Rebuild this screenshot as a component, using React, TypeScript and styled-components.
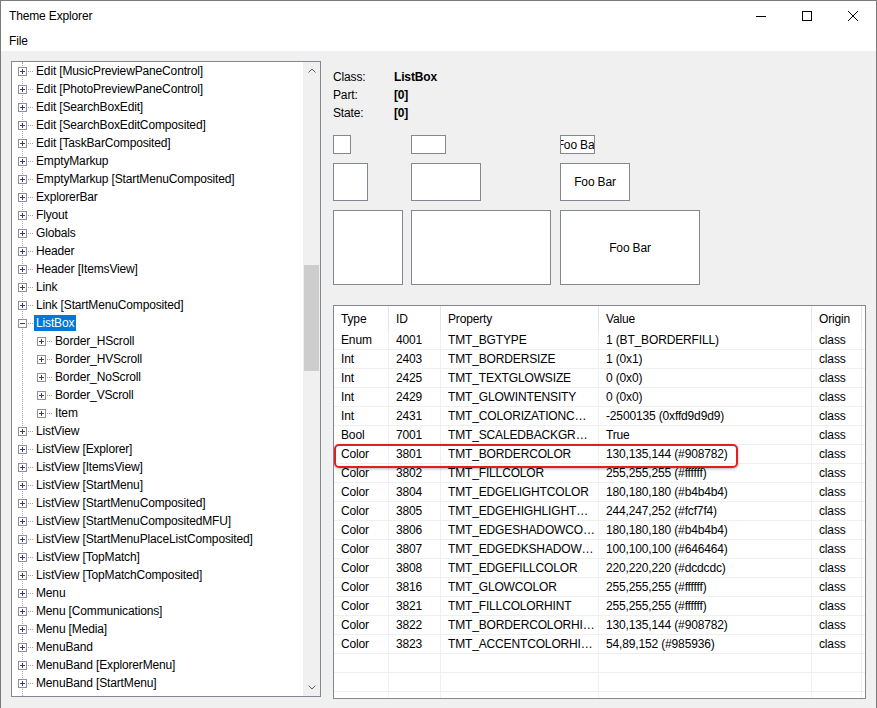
import React from "react";
import styled, { createGlobalStyle } from "styled-components";

const Global = createGlobalStyle`
  html, body { margin: 0; padding: 0; }
  body { font-family: "Liberation Sans", Arial, sans-serif; font-size: 12px; letter-spacing: -0.15px; color: #000; background: #f0f0f0; }
`;

const Win = styled.div`
  width: 877px; height: 708px; box-sizing: border-box; border: 1px solid #7a7a7a; border-bottom: none;
  display: flex; flex-direction: column; background: #f0f0f0; overflow: hidden;
`;
const TitleBar = styled.div`
  height: 29px; background: #fff; display: flex; align-items: center; padding-left: 8px;
`;
const Title = styled.div` flex: 1; `;
const Ctl = styled.div`
  width: 46px; height: 29px; display: flex; align-items: center; justify-content: center;
`;
const MenuBar = styled.div`
  height: 21px; background: #fff; display: flex; align-items: center; padding-left: 8px;
`;
const Body = styled.div`
  flex: 1; display: flex; padding: 10px 10px 0 10px; gap: 12px;
`;
const Tree = styled.div`
  width: 312px; height: 636px; box-sizing: border-box; border: 1px solid #828790; background: #fff;
  display: flex; position: relative;
`;
const TreeList = styled.div` flex: 1; overflow: hidden; position: relative; `;
const TreeRow = styled.div<{ $level: number }>`
  height: 18px; display: flex; align-items: center; padding-left: ${p => 6 + p.$level * 19}px;
`;
const Exp = styled.div`
  width: 9px; height: 9px; box-sizing: border-box; border: 1px solid #919191; background: #fff;
  position: relative; margin-right: 1px; flex: none;
  &::before { content: ""; position: absolute; left: 1px; top: 3px; width: 5px; height: 1px; background: #2c3e8c; }
`;
const Plus = styled(Exp)`
  &::after { content: ""; position: absolute; left: 3px; top: 1px; width: 1px; height: 5px; background: #2c3e8c; }
`;
const Dots = styled.div`
  width: 5px; border-top: 1px dotted #a0a0a0; margin-right: 1px; flex: none;
`;
const Label = styled.span<{ $sel?: boolean }>`
  padding: 1px 2px; background: ${p => (p.$sel ? "#0078d7" : "transparent")};
  color: ${p => (p.$sel ? "#fff" : "#000")};
  white-space: nowrap;
`;
const VLine = styled.div<{ $x: number }>`
  position: absolute; left: ${p => p.$x}px; top: 0; bottom: 0; border-left: 1px dotted #a0a0a0;
`;
const Scroll = styled.div`
  width: 17px; background: #f0f0f0; display: flex; flex-direction: column; align-items: center;
`;
const Arrow = styled.div` height: 17px; display: flex; align-items: center; justify-content: center; `;
const Track = styled.div` flex: 1; width: 100%; position: relative; `;
const Thumb = styled.div`
  position: absolute; left: 1px; right: 1px; top: 186px; height: 106px; background: #cdcdcd;
`;
const Right = styled.div` flex: 1; display: flex; flex-direction: column; `;
const Info = styled.div`
  display: grid; grid-template-columns: 61px auto; row-gap: 1px; padding-top: 8px; line-height: 17px;
`;
const Bold = styled.span` font-weight: bold; `;
const Previews = styled.div`
  display: grid; grid-template-columns: 78px 149px auto; row-gap: 9px; margin-top: 13px; align-items: start;
`;
const PBox = styled.div<{ $w: number; $h: number }>`
  width: ${p => p.$w}px; height: ${p => p.$h}px; box-sizing: border-box; border: 1px solid #828790;
  background: #fff; display: flex; align-items: center; justify-content: center; overflow: hidden;
  white-space: nowrap;
`;
const Table = styled.div`
  margin-top: 20px; width: 533px; height: 394px; box-sizing: border-box; border: 1px solid #828790; background: #fff;
  overflow: hidden; position: relative;
`;
const cols = "55px 52px 158px 213px 50px";
const HeadRow = styled.div`
  display: grid; grid-template-columns: ${cols}; height: 25px;
`;
const HeadCell = styled.div`
  display: flex; align-items: center; padding-left: 7px; border-right: 1px solid #e5e5e5;
`;
const Row = styled.div`
  display: grid; grid-template-columns: ${cols}; height: 19px; border-bottom: 1px solid #f0f0f0; box-sizing: border-box;
`;
const Cell = styled.div`
  padding-left: 7px; padding-right: 3px; border-right: 1px solid #f0f0f0; line-height: 18px;
  white-space: nowrap; overflow: hidden; text-overflow: ellipsis;
`;
const Highlight = styled.div`
  position: absolute; left: 0px; top: 138px; width: 400px; height: 20px; border: 2px solid #e02020;
  border-radius: 5px; box-shadow: 0 1px 3px rgba(0,0,0,0.3);
`;

const tree: [number, string, boolean?][] = [
  [0, "Edit [MusicPreviewPaneControl]"], [0, "Edit [PhotoPreviewPaneControl]"], [0, "Edit [SearchBoxEdit]"],
  [0, "Edit [SearchBoxEditComposited]"], [0, "Edit [TaskBarComposited]"], [0, "EmptyMarkup"],
  [0, "EmptyMarkup [StartMenuComposited]"], [0, "ExplorerBar"], [0, "Flyout"], [0, "Globals"], [0, "Header"],
  [0, "Header [ItemsView]"], [0, "Link"], [0, "Link [StartMenuComposited]"], [0, "ListBox", true],
  [1, "Border_HScroll"], [1, "Border_HVScroll"], [1, "Border_NoScroll"], [1, "Border_VScroll"], [1, "Item"],
  [0, "ListView"], [0, "ListView [Explorer]"], [0, "ListView [ItemsView]"], [0, "ListView [StartMenu]"],
  [0, "ListView [StartMenuComposited]"], [0, "ListView [StartMenuCompositedMFU]"],
  [0, "ListView [StartMenuPlaceListComposited]"], [0, "ListView [TopMatch]"], [0, "ListView [TopMatchComposited]"],
  [0, "Menu"], [0, "Menu [Communications]"], [0, "Menu [Media]"], [0, "MenuBand"], [0, "MenuBand [ExplorerMenu]"],
  [0, "MenuBand [StartMenu]"],
];

const rows = [
  ["Enum", "4001", "TMT_BGTYPE", "1 (BT_BORDERFILL)"],
  ["Int", "2403", "TMT_BORDERSIZE", "1 (0x1)"],
  ["Int", "2425", "TMT_TEXTGLOWSIZE", "0 (0x0)"],
  ["Int", "2429", "TMT_GLOWINTENSITY", "0 (0x0)"],
  ["Int", "2431", "TMT_COLORIZATIONCOL...", "-2500135 (0xffd9d9d9)"],
  ["Bool", "7001", "TMT_SCALEDBACKGROU...", "True"],
  ["Color", "3801", "TMT_BORDERCOLOR", "130,135,144 (#908782)"],
  ["Color", "3802", "TMT_FILLCOLOR", "255,255,255 (#ffffff)"],
  ["Color", "3804", "TMT_EDGELIGHTCOLOR", "180,180,180 (#b4b4b4)"],
  ["Color", "3805", "TMT_EDGEHIGHLIGHTCO...", "244,247,252 (#fcf7f4)"],
  ["Color", "3806", "TMT_EDGESHADOWCOLOR", "180,180,180 (#b4b4b4)"],
  ["Color", "3807", "TMT_EDGEDKSHADOWC...", "100,100,100 (#646464)"],
  ["Color", "3808", "TMT_EDGEFILLCOLOR", "220,220,220 (#dcdcdc)"],
  ["Color", "3816", "TMT_GLOWCOLOR", "255,255,255 (#ffffff)"],
  ["Color", "3821", "TMT_FILLCOLORHINT", "255,255,255 (#ffffff)"],
  ["Color", "3822", "TMT_BORDERCOLORHINT", "130,135,144 (#908782)"],
  ["Color", "3823", "TMT_ACCENTCOLORHINT", "54,89,152 (#985936)"],
];

export default function App() {
  return (
    <Win>
      <Global />
      <TitleBar>
        <Title>Theme Explorer</Title>
        <Ctl><svg width="10" height="10"><path d="M0 5.5h10" stroke="#000" /></svg></Ctl>
        <Ctl><svg width="10" height="10"><rect x="0.5" y="0.5" width="9" height="9" fill="none" stroke="#000" /></svg></Ctl>
        <Ctl><svg width="10" height="10"><path d="M0 0L10 10M10 0L0 10" stroke="#000" /></svg></Ctl>
      </TitleBar>
      <MenuBar>File</MenuBar>
      <Body>
        <Tree>
          <TreeList>
            <VLine $x={10} />
            {tree.map(([lvl, t, sel], i) => (
              <TreeRow key={i} $level={lvl}>
                {sel ? <Exp /> : <Plus />}
                <Dots />
                <Label $sel={sel}>{t}</Label>
              </TreeRow>
            ))}
          </TreeList>
          <Scroll>
            <Arrow><svg width="8" height="5"><path d="M0.5 4.5L4 1L7.5 4.5" fill="none" stroke="#606060" /></svg></Arrow>
            <Track><Thumb /></Track>
            <Arrow><svg width="8" height="5"><path d="M0.5 0.5L4 4L7.5 0.5" fill="none" stroke="#606060" /></svg></Arrow>
          </Scroll>
        </Tree>
        <Right>
          <Info>
            <span>Class:</span><Bold>ListBox</Bold>
            <span>Part:</span><Bold>[0]</Bold>
            <span>State:</span><Bold>[0]</Bold>
          </Info>
          <Previews>
            <PBox $w={18} $h={19} />
            <PBox $w={35} $h={19} />
            <PBox $w={35} $h={19}>Foo Bar</PBox>
            <PBox $w={35} $h={38} />
            <PBox $w={70} $h={38} />
            <PBox $w={70} $h={38}>Foo Bar</PBox>
            <PBox $w={70} $h={75} />
            <PBox $w={140} $h={75} />
            <PBox $w={140} $h={75}>Foo Bar</PBox>
          </Previews>
          <Table>
            <HeadRow>
              {["Type", "ID", "Property", "Value", "Origin"].map(h => <HeadCell key={h}>{h}</HeadCell>)}
            </HeadRow>
            {rows.map((r, i) => (
              <Row key={i}>
                {r.map((c, j) => <Cell key={j}>{c}</Cell>)}
                <Cell>class</Cell>
              </Row>
            ))}
            {[0, 1, 2].map(i => (
              <Row key={"e" + i}>{[0, 1, 2, 3, 4].map(j => <Cell key={j} />)}</Row>
            ))}
            <Highlight />
          </Table>
        </Right>
      </Body>
    </Win>
  );
}
